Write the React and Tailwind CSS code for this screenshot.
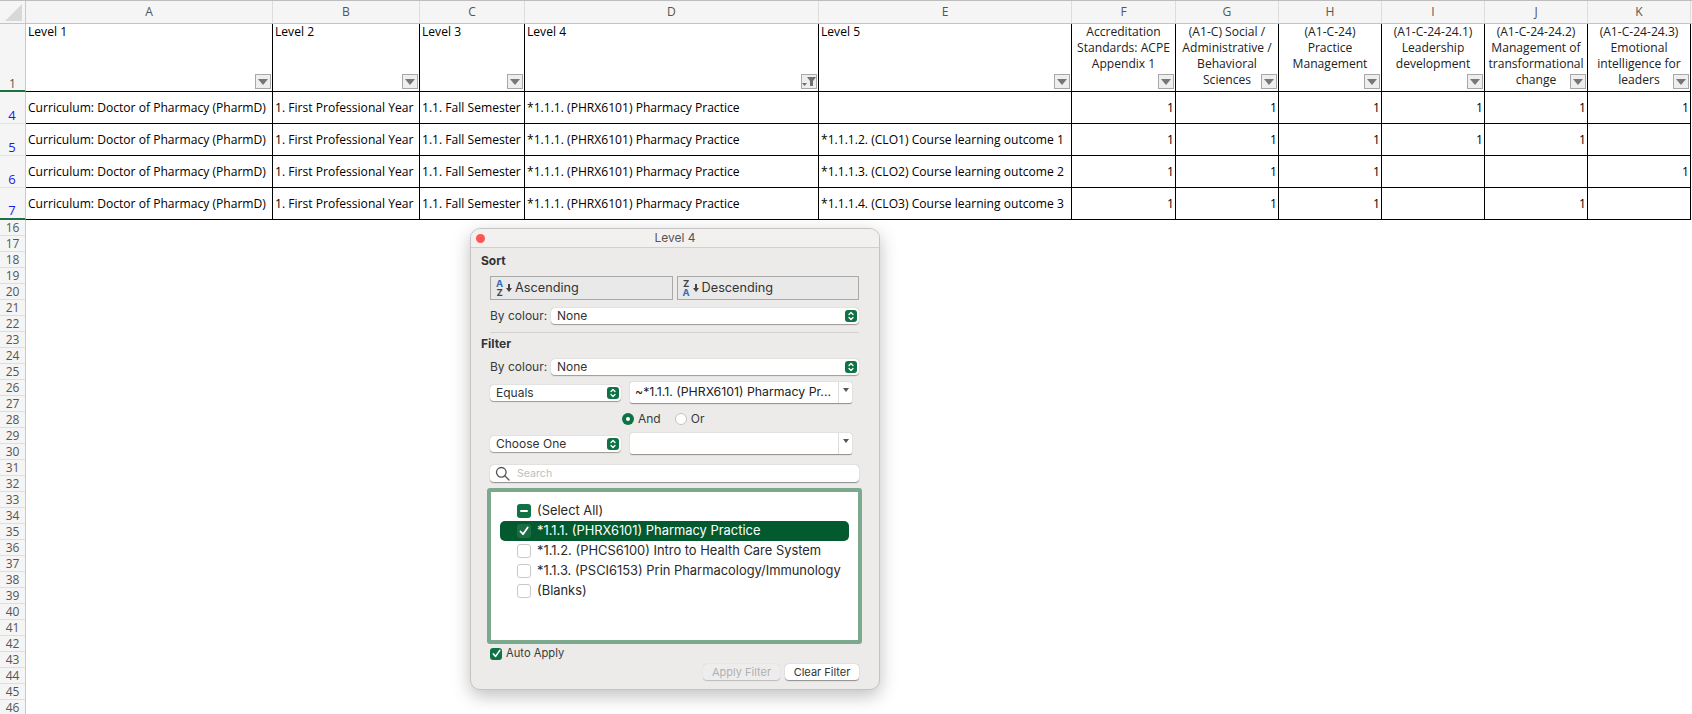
import React from "react";

const sheetFont = "font-['Open_Sans',sans-serif]";
const uiFont = "font-['Inter','Liberation_Sans',sans-serif]";

const colsClass =
  "grid grid-cols-[26px_247px_147px_105px_294px_253px_104px_103px_103px_103px_103px_103px]";

const letters = ["A", "B", "C", "D", "E", "F", "G", "H", "I", "J", "K"];

const headers = [
  { t: "Level 1" },
  { t: "Level 2" },
  { t: "Level 3" },
  { t: "Level 4", active: true },
  { t: "Level 5" },
  { t: "Accreditation Standards: ACPE Appendix 1", c: true },
  { t: "(A1-C) Social / Administrative / Behavioral Sciences", c: true },
  { t: "(A1-C-24)\nPractice Management", c: true },
  { t: "(A1-C-24-24.1) Leadership development", c: true },
  { t: "(A1-C-24-24.2) Management of transformational change", c: true },
  { t: "(A1-C-24-24.3) Emotional intelligence for leaders", c: true },
];

const rows = [
  { n: 4, e: "", v: [1, 1, 1, 1, 1, 1] },
  { n: 5, e: "*1.1.1.2. (CLO1) Course learning outcome 1", v: [1, 1, 1, 1, 1, ""] },
  { n: 6, e: "*1.1.1.3. (CLO2) Course learning outcome 2", v: [1, 1, 1, "", "", 1] },
  { n: 7, e: "*1.1.1.4. (CLO3) Course learning outcome 3", v: [1, 1, 1, "", 1, ""] },
];

function FilterBtn({ active }) {
  return (
    <span className="absolute right-px bottom-[2px] w-[16px] h-[15px] border border-[#a8a8a8] bg-[#eeeeee] flex items-center justify-center">
      {active ? (
        <svg width="14" height="11" viewBox="0 0 14 11">
          <path d="M0 7h5L2.5 10z" fill="#707070" />
          <path d="M5 1h9L11 5v5H8V5z" fill="#707070" />
        </svg>
      ) : (
        <svg width="10" height="6" viewBox="0 0 10 6">
          <path d="M0 0h10L5 6z" fill="#777777" />
        </svg>
      )}
    </span>
  );
}

function Sheet() {
  return (
    <div className={`${sheetFont} text-[12.1px] leading-[16px] text-black`}>
      <div className="h-px bg-[#bdbdbd]" />
      <div className={`${colsClass} h-[23px] bg-[#f5f5f5] border-b border-[#c4c4c4] text-[#555]`}>
        <div className="border-r border-[#c9c9c9] flex items-end justify-end pr-[3px] pb-[2px]">
          <svg width="17" height="17" viewBox="0 0 17 17">
            <path d="M17 0v17H0z" fill="#d8d8d8" />
          </svg>
        </div>
        {letters.map((l) => (
          <div key={l} className="border-r border-[#dcdcdc] flex items-center justify-center">
            {l}
          </div>
        ))}
      </div>
      <div className={`${colsClass} h-[68px]`}>
        <div className="bg-[#f5f5f5] border-r border-[#c9c9c9] border-b-2 border-b-[#1b7344] flex items-end justify-center text-[#555] leading-[12px]">
          1
        </div>
        {headers.map((h) => (
          <div
            key={h.t}
            className={`relative border-r border-b border-black px-[2px] whitespace-pre-line ${h.c ? "text-center text-[#222]" : ""}`}
          >
            {h.t}
            <FilterBtn active={h.active} />
          </div>
        ))}
      </div>
      {rows.map((r) => (
        <div key={r.n} className={`${colsClass} h-[32px]`}>
          <div
            className={`bg-[#f5f5f5] border-r border-[#c9c9c9] flex items-end justify-center pr-[1px] text-[13px] text-[#1a1aee] ${r.n === 7 ? "border-b-2 border-b-[#1b7344]" : "border-b border-b-[#e2e2e2]"}`}
          >
            {r.n}
          </div>
          {[
            "Curriculum: Doctor of Pharmacy (PharmD)",
            "1. First Professional Year",
            "1.1. Fall Semester",
            "*1.1.1. (PHRX6101) Pharmacy Practice",
            r.e,
          ].map((t, i) => (
            <div
              key={i}
              className="border-r border-b border-black flex items-center px-[2px] whitespace-nowrap overflow-hidden"
            >
              {t}
            </div>
          ))}
          {r.v.map((v, i) => (
            <div key={i} className="border-r border-b border-black flex items-center justify-end pr-[1px]">
              {v}
            </div>
          ))}
        </div>
      ))}
      <div className="w-[26px] bg-[#f5f5f5] border-r border-[#c9c9c9] text-[#555]">
        {Array.from({ length: 31 }, (_, i) => (
          <div key={i} className="h-[16px] border-b border-[#dedede] flex items-center justify-center text-[12px]">
            {i + 16}
          </div>
        ))}
      </div>
    </div>
  );
}

function Stepper() {
  return (
    <span className="w-[12px] h-[12px] rounded-[3px] bg-[#0f7245] flex items-center justify-center shrink-0">
      <svg width="8" height="10" viewBox="0 0 8 10" fill="none" stroke="#fff" strokeWidth="1.3" strokeLinecap="round" strokeLinejoin="round">
        <path d="M2 3.5L4 1.5l2 2M2 6.5l2 2 2-2" />
      </svg>
    </span>
  );
}

function Select({ label, className }) {
  return (
    <div className={`h-[16px] bg-white rounded-[4px] shadow-[0_0.5px_1px_rgba(0,0,0,0.35)] flex items-center justify-between pl-[6px] pr-[2px] ${className}`}>
      <span className="text-[#333]">{label}</span>
      <Stepper />
    </div>
  );
}

function Combo({ value }) {
  return (
    <div className="w-[222px] h-[21px] ml-[9px] bg-white shadow-[0_0.5px_1px_rgba(0,0,0,0.4)] rounded-[2px] flex items-center">
      <span className="flex-1 pl-[5px] text-[12.3px] text-[#222] whitespace-nowrap overflow-hidden">{value}</span>
      <span className="w-[14px] h-full border-l border-[#dddddd] flex items-start justify-center pt-[6px]">
        <svg width="6" height="4" viewBox="0 0 6 4"><path d="M0 0h6L3 4z" fill="#555" /></svg>
      </span>
    </div>
  );
}

function SortIcon({ top, bottom }) {
  return (
    <span className="flex items-center mr-[3px]">
      <span className="flex flex-col text-[9.5px] leading-[9px] font-bold items-center">
        <span className={top === "A" ? "text-[#2f6fb5]" : "text-[#444]"}>{top}</span>
        <span className={bottom === "A" ? "text-[#2f6fb5]" : "text-[#444]"}>{bottom}</span>
      </span>
      <svg width="6" height="8" viewBox="0 0 6 8" className="ml-[3px]">
        <path d="M2 0h2v4h2L3 8 0 4h2z" fill="#444" />
      </svg>
    </span>
  );
}

function ListRow({ label, state, selected }) {
  return (
    <div className={`h-[20px] flex items-center pl-[17px] rounded-[5px] text-[12.9px] ${selected ? "bg-[#025a2e] text-white" : "text-[#2a2a2a]"}`}>
      {state === "mixed" ? (
        <span className="w-[14px] h-[14px] rounded-[3px] bg-[#0f7245] flex items-center justify-center">
          <span className="w-[8px] h-[2px] bg-white rounded-full" />
        </span>
      ) : state === "checked" ? (
        <span className="w-[14px] h-[14px] rounded-[3px] bg-[#1a6c43] flex items-center justify-center">
          <svg width="10" height="10" viewBox="0 0 10 10" fill="none" stroke="#fff" strokeWidth="1.8" strokeLinecap="round" strokeLinejoin="round">
            <path d="M1.5 5.5L4 8.2 8.7 1.5" />
          </svg>
        </span>
      ) : (
        <span className="w-[14px] h-[14px] rounded-[3px] bg-white border border-[#c9c9c9]" />
      )}
      <span className="ml-[6px] whitespace-nowrap">{label}</span>
    </div>
  );
}

function Dialog() {
  return (
    <div className={`absolute left-[470px] top-[228px] w-[410px] h-[462px] rounded-[10px] border border-[#c4c4c4] bg-[#ecebea] shadow-[0_6px_18px_rgba(0,0,0,0.25)] overflow-hidden text-[12px] text-[#3a3a3a] ${uiFont}`}>
      <div className="relative h-[19px] bg-[#f3f1f0] border-b border-[#d2d0cf] flex items-center justify-center text-[#555]">
        <span className="absolute left-[5px] top-[5px] w-[9px] h-[9px] rounded-full bg-[#fc5753]" />
        Level 4
      </div>
      <div className="pl-[19px] pr-[20px] pt-[5px]">
        <div className="-ml-[9px] h-[15px] leading-[15px] font-bold text-[#333]">Sort</div>
        <div className="flex gap-[4px] mt-[8px]">
          <div className="w-[183px] h-[24px] border border-[#a9a9a9] bg-[#e9e9e9] flex items-center pl-[5px] text-[12.7px] text-[#333]">
            <SortIcon top="A" bottom="Z" />
            Ascending
          </div>
          <div className="w-[183px] h-[24px] border border-[#a9a9a9] bg-[#e9e9e9] flex items-center pl-[5px] text-[12.7px] text-[#333]">
            <SortIcon top="Z" bottom="A" />
            Descending
          </div>
        </div>
        <div className="flex items-center mt-[7px]">
          <span className="w-[61px]">By colour:</span>
          <Select label="None" className="flex-1" />
        </div>
        <div className="h-px bg-[#d3d1d0] mt-[7px]" />
        <div className="-ml-[9px] h-[15px] leading-[15px] font-bold text-[#333] mt-[3px]">Filter</div>
        <div className="flex items-center mt-[7px]">
          <span className="w-[61px]">By colour:</span>
          <Select label="None" className="flex-1" />
        </div>
        <div className="flex items-center mt-[6px]">
          <Select label="Equals" className="w-[131px]" />
          <Combo value="~*1.1.1. (PHRX6101) Pharmacy Pr..." />
        </div>
        <div className="flex items-center h-[13px] mt-[9px] pl-[132px]">
          <span className="w-[12px] h-[12px] rounded-full bg-[#0f7245] flex items-center justify-center">
            <span className="w-[4px] h-[4px] rounded-full bg-white" />
          </span>
          <span className="ml-[4px]">And</span>
          <span className="w-[12px] h-[12px] rounded-full bg-white border border-[#c4c4c4] ml-[14px]" />
          <span className="ml-[4px]">Or</span>
        </div>
        <div className="flex items-center mt-[8px]">
          <Select label="Choose One" className="w-[131px]" />
          <Combo value="" />
        </div>
        <div className="h-[17px] mt-[11px] bg-white rounded-[4px] shadow-[0_0.5px_1px_rgba(0,0,0,0.4)] flex items-center pl-[5px]">
          <svg width="15" height="15" viewBox="0 0 15 15" fill="none" stroke="#555" strokeWidth="1.3" strokeLinecap="round">
            <circle cx="6.3" cy="6.3" r="4.8" />
            <path d="M10 10l4 4" />
          </svg>
          <span className="ml-[7px] text-[10.6px] text-[#bdbdbd]">Search</span>
        </div>
        <div className="-mx-[3px] mt-[6px] h-[156px] bg-white border-[4px] border-[#7ca98e] rounded-[3px] pt-[9px] px-[9px]">
          <ListRow label="(Select All)" state="mixed" />
          <ListRow label="*1.1.1. (PHRX6101) Pharmacy Practice" state="checked" selected />
          <ListRow label="*1.1.2. (PHCS6100) Intro to Health Care System" />
          <ListRow label="*1.1.3. (PSCI6153) Prin Pharmacology/Immunology" />
          <ListRow label="(Blanks)" />
        </div>
        <div className="flex items-center mt-[3px] h-[13px]">
          <span className="w-[12px] h-[12px] rounded-[3px] bg-[#0f7245] flex items-center justify-center">
            <svg width="9" height="9" viewBox="0 0 10 10" fill="none" stroke="#fff" strokeWidth="1.8" strokeLinecap="round" strokeLinejoin="round">
              <path d="M1.5 5.5L4 8.2 8.7 1.5" />
            </svg>
          </span>
          <span className="ml-[4px] text-[11.2px]">Auto Apply</span>
        </div>
        <div className="flex justify-end gap-[5px] mt-[4px]">
          <span className="w-[77px] h-[16px] rounded-[4px] bg-[#eeeded] shadow-[0_0.5px_1px_rgba(0,0,0,0.2)] text-[#b0b0b0] text-[11px] flex items-center justify-center">
            Apply Filter
          </span>
          <span className="w-[74px] h-[16px] rounded-[4px] bg-white shadow-[0_0.5px_1px_rgba(0,0,0,0.4)] text-[#333] text-[11px] flex items-center justify-center">
            Clear Filter
          </span>
        </div>
      </div>
    </div>
  );
}

export default function App() {
  return (
    <div className="relative w-[1692px] h-[714px] overflow-hidden bg-white">
      <Sheet />
      <Dialog />
    </div>
  );
}
